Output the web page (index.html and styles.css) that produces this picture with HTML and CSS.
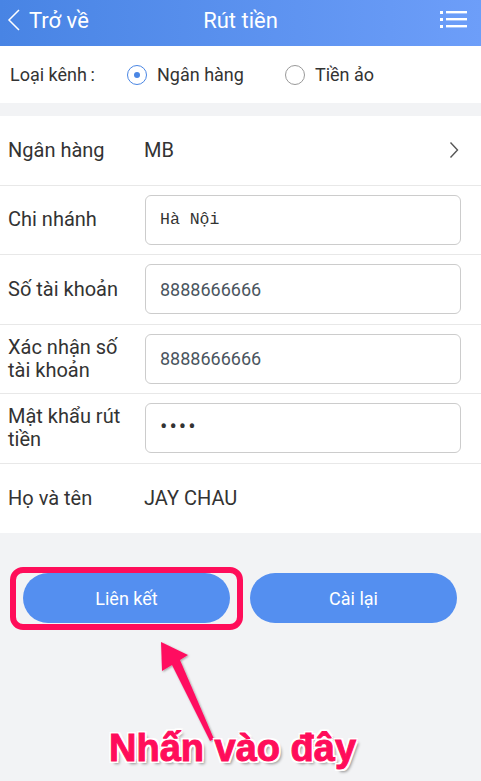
FILE: index.html
```html
<!DOCTYPE html>
<html lang="vi">
<head>
  <meta charset="UTF-8">
  <meta name="viewport" content="width=device-width, initial-scale=1.0">
  <title>Rút tiền</title>
  <link rel="stylesheet" href="styles.css">
</head>
<body>
  <div class="topbar">
    <a class="back" href="#">
      <svg width="14" height="24" viewBox="0 0 14 24"><path d="M12 2 L2 12 L12 22" fill="none" stroke="#fff" stroke-width="1.5"/></svg>
      <span>Trở về</span>
    </a>
    <div class="title">Rút tiền</div>
    <div class="menu">
      <svg width="28" height="22" viewBox="0 0 28 22"><g fill="#fff"><rect x="0" y="3" width="3" height="3"/><rect x="0" y="10" width="3" height="3"/><rect x="0" y="17" width="3" height="3"/><rect x="6" y="3" width="21" height="2.4"/><rect x="6" y="10" width="21" height="2.4"/><rect x="6" y="17" width="21" height="2.4"/></g></svg>
    </div>
  </div>

  <div class="channel">
    <span class="channel-label">Loại kênh&thinsp;:</span>
    <label class="radio checked"><span class="dot"></span>Ngân hàng</label>
    <label class="radio"><span class="dot"></span>Tiền ảo</label>
  </div>

  <div class="form">
    <div class="row">
      <div class="label">Ngân hàng</div>
      <div class="value">MB</div>
      <svg class="chev" width="10" height="18" viewBox="0 0 10 18"><path d="M1.5 1.5 L8.5 9 L1.5 16.5" fill="none" stroke="#555" stroke-width="1.4"/></svg>
    </div>
    <div class="row">
      <div class="label">Chi nhánh</div>
      <div class="field mono">Hà Nội</div>
    </div>
    <div class="row">
      <div class="label">Số tài khoản</div>
      <div class="field">8888666666</div>
    </div>
    <div class="row">
      <div class="label">Xác nhận số tài khoản</div>
      <div class="field">8888666666</div>
    </div>
    <div class="row">
      <div class="label">Mật khẩu rút tiền</div>
      <div class="field pass">••••</div>
    </div>
    <div class="row last">
      <div class="label">Họ và tên</div>
      <div class="value">JAY CHAU</div>
    </div>
  </div>

  <div class="actions">
    <button class="btn">Liên kết</button>
    <button class="btn">Cài lại</button>
  </div>

  <!-- annotation overlay -->
  <div class="highlight"></div>
  <svg class="arrow" width="80" height="120" viewBox="0 0 80 120">
    <defs>
      <filter id="sh" x="-20%" y="-20%" width="140%" height="140%"><feDropShadow dx="1" dy="1" stdDeviation="1" flood-color="#000" flood-opacity="0.35"/></filter>
    </defs>
    <path d="M1 1 L28 14 L20 19 L54 98 L50 100 L12 24 L2 30 Z" fill="#ff1060" filter="url(#sh)"/>
  </svg>
  <div class="hint">Nhấn vào đây</div>
</body>
</html>
```

FILE: styles.css
```css
html, body {
  margin: 0;
  height: 100%;
}
body {
  font-family: Roboto, 'Liberation Sans', sans-serif;
  background-color: #f2f3f5;
  color: #333;
  position: relative;
}
.topbar {
  height: 46px;
  box-sizing: border-box;
  padding-bottom: 6px;
  background: linear-gradient(to right, #4884e4, #6d9ef9);
  display: grid;
  grid-template-columns: 1fr auto 1fr;
  align-items: center;
  color: #fff;
}
.back {
  display: flex;
  align-items: center;
  color: #fff;
  text-decoration: none;
  font-size: 22px;
  padding-left: 7px;
  gap: 8px;
}
.title {
  font-size: 22px;
}
.menu {
  justify-self: end;
  padding-right: 13px;
  padding-top: 2px;
}
.channel {
  height: 57px;
  background: #fff;
  display: flex;
  align-items: center;
  font-size: 18px;
  margin-bottom: 13px;
}
.channel-label {
  padding-left: 10px;
  width: 117px;
}
.radio {
  display: flex;
  align-items: center;
  gap: 10px;
  margin-right: 41px;
}
.radio .dot {
  width: 20px;
  height: 20px;
  border: 1px solid #999;
  border-radius: 50%;
  box-sizing: border-box;
  position: relative;
}
.radio.checked .dot {
  border-color: #4a86e4;
}
.radio.checked .dot::after {
  content: "";
  position: absolute;
  left: 6px;
  top: 6px;
  width: 6px;
  height: 6px;
  border-radius: 50%;
  background: #4a86e4;
}
.form {
  background: #fff;
}
.row {
  height: 69.5px;
  box-sizing: border-box;
  border-bottom: 1px solid #e8e8e8;
  display: flex;
  align-items: center;
  font-size: 20px;
}
.row.last {
  border-bottom: none;
}
.label {
  width: 144px;
  padding: 0 16px 0 8px;
  box-sizing: border-box;
  line-height: 23px;
  flex-shrink: 0;
}
.value {
  flex: 1;
}
.chev {
  margin-right: 22px;
}
.field {
  width: 316px;
  height: 50px;
  margin-left: 1px;
  box-sizing: border-box;
  border: 1px solid #ccc;
  border-radius: 6px;
  display: flex;
  align-items: center;
  padding-left: 14px;
  font-size: 18px;
  color: #4a5560;
}
.field.mono {
  font-family: 'Liberation Mono', monospace;
  font-size: 16.5px;
  color: #333;
}
.field.pass {
  letter-spacing: 2px;
  font-size: 22px;
  padding-bottom: 4px;
  color: #333;
}
.actions {
  display: flex;
  gap: 20px;
  padding: 40px 24px 0 23px;
}
.btn {
  flex: 1;
  height: 50px;
  border: none;
  border-radius: 25px;
  background: #548ff0;
  color: #fff;
  font-family: Roboto, 'Liberation Sans', sans-serif;
  font-size: 18px;
}
.highlight {
  position: absolute;
  left: 10px;
  top: 567px;
  width: 233px;
  height: 63px;
  box-sizing: border-box;
  border: 6px solid #ff0d5a;
  border-radius: 13px;
}
.arrow {
  position: absolute;
  left: 160px;
  top: 641px;
}
.hint {
  position: absolute;
  left: 109px;
  top: 727px;
  font-family: 'Liberation Sans', Arial, sans-serif;
  font-weight: bold;
  font-size: 38px;
  color: #ff0d5a;
  -webkit-text-stroke: 1px #ff0d5a;
  text-shadow: 2px 0 0 #fff, -2px 0 0 #fff, 0 2px 0 #fff, 0 -2px 0 #fff, 2px 2px 0 #fff, -2px -2px 0 #fff, 2px -2px 0 #fff, -2px 2px 0 #fff, 3px 3px 3px rgba(0,0,0,0.4);
}
```
